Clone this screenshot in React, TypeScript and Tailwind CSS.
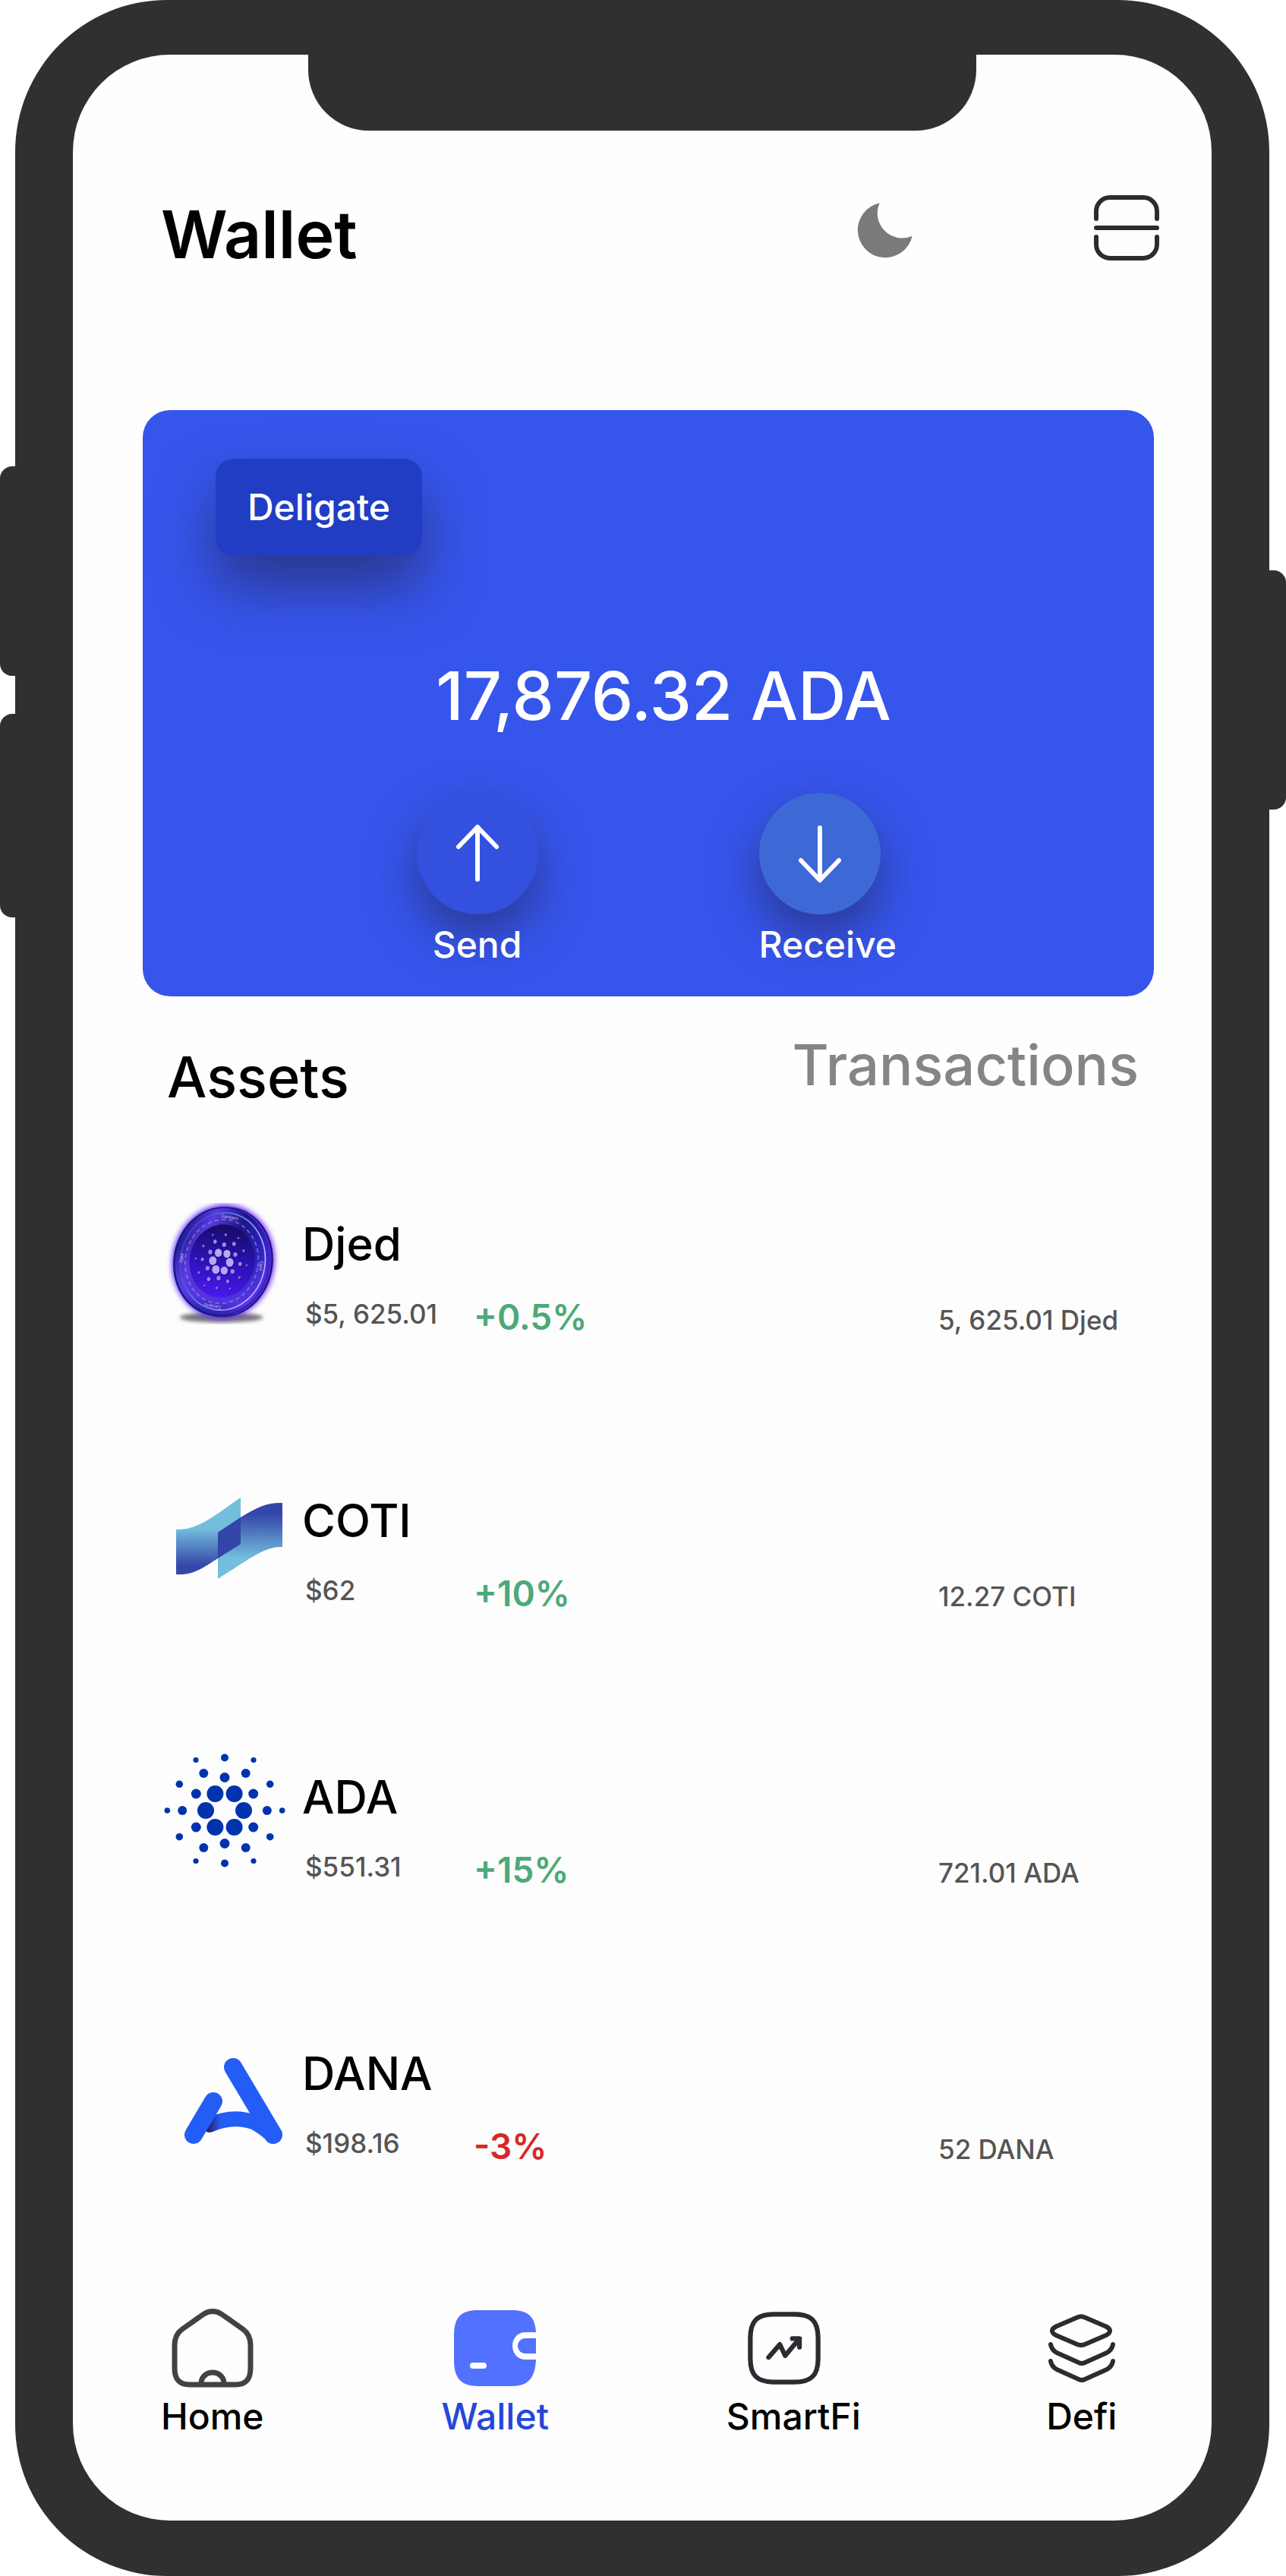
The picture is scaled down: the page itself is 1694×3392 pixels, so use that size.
import type { ReactNode } from "react";

const COIN_DOTS: [number, number, number][] = [
  [233, 239, 14], [267, 243, 14], [211, 270, 15], [278, 277, 15], [223, 305, 15], [256, 309, 14],
  [220, 195, 7], [256, 207, 8], [201, 236, 8], [295, 204, 7], [300, 246, 8], [170, 265, 6],
  [190, 300, 8], [319, 283, 7], [289, 313, 8], [234, 339, 8], [270, 352, 6], [195, 343, 7],
  [333, 231, 5], [316, 337, 5], [174, 212, 5], [262, 168, 5], [211, 168, 4], [312, 181, 4],
  [144, 262, 4], [156, 317, 5], [345, 288, 4], [227, 378, 5], [178, 368, 4], [279, 381, 4],
];

function DjedLogo() {
  return (
    <svg viewBox="18 42 480 480" className="size-40" aria-hidden="true">
      <defs>
        <linearGradient id="djed-face" x1="0" y1="0.3" x2="1" y2="0.6">
          <stop offset="0" stopColor="#1c1786" />
          <stop offset="0.25" stopColor="#5a3be0" />
          <stop offset="0.55" stopColor="#1d1585" />
          <stop offset="0.8" stopColor="#2a22b8" />
          <stop offset="1" stopColor="#4a30d8" />
        </linearGradient>
        <linearGradient id="djed-lower" x1="0" y1="0" x2="0" y2="1">
          <stop offset="0.45" stopColor="#5a38e6" stopOpacity="0" />
          <stop offset="0.85" stopColor="#5a38e6" stopOpacity="0.9" />
          <stop offset="1" stopColor="#2a1fae" />
        </linearGradient>
        <linearGradient id="djed-core" x1="0" y1="0" x2="0" y2="1">
          <stop offset="0" stopColor="#150c66" />
          <stop offset="0.5" stopColor="#2c12b4" />
          <stop offset="1" stopColor="#4a18ee" />
        </linearGradient>
        <linearGradient id="djed-ring" x1="0" y1="0" x2="1" y2="0.3">
          <stop offset="0" stopColor="#3b2ad0" />
          <stop offset="0.5" stopColor="#5d80e8" />
          <stop offset="1" stopColor="#c7a8ff" />
        </linearGradient>
        <filter id="djed-blur" x="-30%" y="-30%" width="160%" height="160%">
          <feGaussianBlur stdDeviation="11" />
        </filter>
        <filter id="djed-shadow" x="-20%" y="-150%" width="140%" height="400%">
          <feGaussianBlur stdDeviation="8" />
        </filter>
      </defs>
      <ellipse cx="245" cy="494" rx="164" ry="20" fill="#5f5c66" opacity="0.85" filter="url(#djed-shadow)" />
      <g transform="rotate(10 250 275)">
        <ellipse cx="252" cy="273" rx="202" ry="226" fill="#6a2cff" filter="url(#djed-blur)" />
        <ellipse cx="260" cy="274" rx="188" ry="218" fill="#21075e" />
        <ellipse cx="255" cy="274" rx="188" ry="217" fill="#4127d0" />
        <ellipse cx="243" cy="275" rx="188" ry="217" fill="#0f1c7c" />
        <ellipse cx="246" cy="274" rx="184" ry="212" fill="url(#djed-face)" />
        <ellipse cx="246" cy="274" rx="184" ry="212" fill="url(#djed-lower)" />
        <ellipse cx="250" cy="273" rx="167" ry="193" fill="none" stroke="url(#djed-ring)" strokeWidth="5" />
        <ellipse cx="246" cy="274" rx="144" ry="166" fill="none" stroke="#8f8cf0" strokeWidth="6" strokeDasharray="17 11" opacity="0.6" />
        <ellipse cx="247" cy="272" rx="129" ry="145" fill="url(#djed-core)" />
      </g>
      {COIN_DOTS.map(([x, y, r]) => (
        <g key={`${x}-${y}`}>
          <ellipse cx={x + 3} cy={y + 3} rx={r} ry={r * 1.15} fill="#12085a" opacity="0.7" />
          <ellipse cx={x} cy={y} rx={r} ry={r * 1.15} fill={r > 10 ? "#b9a5f5" : r > 5 ? "#9d86ee" : "#8a6ae0"} />
        </g>
      ))}
      <g fill="#c9c4f5" fontFamily="Inter, sans-serif" fontSize="17" textAnchor="middle">
        <text transform="translate(277 104) rotate(10)">Cardano</text>
        <text transform="translate(211 444) rotate(190)">Cardano</text>
        <text transform="translate(93 260) rotate(-84)">Djed</text>
        <text transform="translate(396 290) rotate(96)">Djed</text>
      </g>
    </svg>
  );
}

function CotiLogo() {
  return (
    <svg viewBox="0 0 160 160" className="size-40" aria-hidden="true">
      <defs>
        <linearGradient id="coti-left" gradientUnits="userSpaceOnUse" x1="0" y1="64" x2="0" y2="114">
          <stop offset="0" stopColor="#74bedd" />
          <stop offset="1" stopColor="#3446a9" />
        </linearGradient>
        <linearGradient id="coti-right" gradientUnits="userSpaceOnUse" x1="0" y1="46" x2="0" y2="104">
          <stop offset="0" stopColor="#3446a9" />
          <stop offset="1" stopColor="#74bedd" />
        </linearGradient>
      </defs>
      <path d="M16 66C46 67 68 46 101 24V85L71 104C52 116 38 127 16 125Z" fill="url(#coti-left)" />
      <path d="M71 70L101 50C122 37 136 30 156 31V89C134 88 118 101 71 131Z" fill="url(#coti-right)" />
      <path d="M71 70L101 50V85L71 104Z" fill="#3345a8" />
    </svg>
  );
}

const ADA_DOTS: [number, number, number][] = [
  [12.6, 22, 11], [25, 0, 11],
  [0, 43.5, 6.5], [37.7, 22, 6.5],
  [27.7, 49, 6], [55.8, 0, 6],
  [59.7, 34.7, 4.8], [0, 69.5, 5],
  [38, 66.5, 3.6], [75.7, 0, 3.8],
];

function AdaLogo() {
  return (
    <svg viewBox="0 0 160 160" className="size-40 overflow-visible" fill="#0033ad" aria-hidden="true">
      {ADA_DOTS.flatMap(([x, y, r]) =>
        [[1, 1], [-1, 1], [1, -1], [-1, -1]]
          .filter(([sx, sy]) => (x !== 0 || sx > 0) && (y !== 0 || sy > 0))
          .map(([sx, sy]) => <circle key={`${x * sx}:${y * sy}`} cx={80 + x * sx} cy={72 + y * sy} r={r} />),
      )}
    </svg>
  );
}

function DanaLogo() {
  return (
    <svg viewBox="0 0 160 160" className="size-40" fill="none" strokeLinecap="round" aria-hidden="true">
      <defs>
        <linearGradient id="dana-bar" gradientUnits="userSpaceOnUse" x1="54" y1="0" x2="74" y2="0">
          <stop offset="0.2" stopColor="#2b1a6e" />
          <stop offset="1" stopColor="#245df5" />
        </linearGradient>
      </defs>
      <path d="M60 122Q91 108 120 119Q134 127 144 137" stroke="url(#dana-bar)" strokeWidth="20" />
      <path d="M91 46L144 135" stroke="#245df5" strokeWidth="24" />
      <path d="M65 91L39 135" stroke="#245df5" strokeWidth="24" />
    </svg>
  );
}

function MoonIcon() {
  return (
    <svg viewBox="88 111 219 219" className="size-[73px]" aria-hidden="true">
      <path d="M177 112A109 109 0 1 0 306 242A98 98 0 0 1 177 112Z" fill="#7a7a7a" />
    </svg>
  );
}

function ScanIcon() {
  return (
    <svg viewBox="0 0 258 258" className="size-[86px]" fill="none" stroke="#292d32" strokeWidth="18" strokeLinecap="round" aria-hidden="true">
      <path d="M9 93V63A54 54 0 0 1 63 9H195A54 54 0 0 1 249 63V93M9 129H249M9 165V195A54 54 0 0 0 63 249H195A54 54 0 0 0 249 195V165" />
    </svg>
  );
}

function ArrowIcon({ down = false }: { down?: boolean }) {
  return (
    <svg viewBox="0 0 60 80" className="h-20 w-[60px]" fill="none" stroke="#fff" strokeWidth="6" strokeLinecap="round" strokeLinejoin="round" aria-hidden="true">
      <path d={down ? "M30 6V75M5 49L30 75L55 49" : "M30 74V5M5 31L30 5L55 31"} />
    </svg>
  );
}

function HomeIcon() {
  return (
    <svg viewBox="0 0 108 104" className="h-[104px] w-[108px]" fill="none" stroke="#434240" strokeWidth="7" aria-hidden="true">
      <path d="M54 3.5C49 3.5 45 5 41 8L14 27C7 32 4 38 4 48V78C4 93 10 100 24 100H84C98 100 104 93 104 78V48C104 38 101 32 94 27L67 8C63 5 59 3.5 54 3.5Z" />
      <path d="M39 98A15 14 0 0 1 69 98" />
    </svg>
  );
}

function WalletIcon() {
  return (
    <svg viewBox="0 0 108 100" className="h-[100px] w-[108px]" aria-hidden="true">
      <path d="M32 0H76C98 0 107 9 108 29H94C84 29 77 37 77 47S84 65 94 65H108C107 89 98 100 76 100H32C9 100 0 89 0 66V34C0 9 9 0 32 0Z" fill="#5271ff" />
      <path d="M108 37H94C88 37 84 42 84 47S88 57 94 57H108Z" fill="#5271ff" />
      <rect x="21" y="69" width="22" height="8" rx="4" fill="#fff" />
    </svg>
  );
}

function SmartFiIcon() {
  return (
    <svg viewBox="1.25 1.25 21.5 21.5" className="size-24" fill="none" stroke="#292d32" strokeWidth="1.4" strokeLinecap="round" strokeLinejoin="round" aria-hidden="true">
      <path d="M9 22h6c5 0 7-2 7-7V9c0-5-2-7-7-7H9C4 2 2 4 2 9v6c0 5 2 7 7 7Z" />
      <path d="M7.4 14.7L10.7 10.9L12.3 14.2L16.5 9.2M14.4 9.2H16.5V11.7" />
    </svg>
  );
}

function DefiIcon() {
  return (
    <svg viewBox="0 0 88 90" className="h-[90px] w-[88px]" fill="none" stroke="#292d32" strokeWidth="6" strokeLinecap="round" strokeLinejoin="round" aria-hidden="true">
      <path d="M38 4.5Q43 2 48 4.5L76 16.500Q86 22 76 28L48 40Q43 42 38 40L10 28Q0 22 10 16.500Z" />
      <path d="M3 40Q4 47 11 51L40 64Q44 66 48 64L77 51Q84 47 85 40" />
      <path d="M3 62Q4 69 11 73L40 86Q44 88 48 86L77 73Q84 69 85 62" />
    </svg>
  );
}

interface Asset {
  name: string;
  price: string;
  change: string;
  amount: string;
  logo: ReactNode;
}

const ASSETS: Asset[] = [
  { name: "Djed", price: "$5, 625.01", change: "+0.5%", amount: "5, 625.01 Djed", logo: <DjedLogo /> },
  { name: "COTI", price: "$62", change: "+10%", amount: "12.27 COTI", logo: <CotiLogo /> },
  { name: "ADA", price: "$551.31", change: "+15%", amount: "721.01 ADA", logo: <AdaLogo /> },
  { name: "DANA", price: "$198.16", change: "-3%", amount: "52 DANA", logo: <DanaLogo /> },
];

const NAV = [
  { label: "Home", icon: <HomeIcon />, active: false, iconClass: "" },
  { label: "Wallet", icon: <WalletIcon />, active: true, iconClass: "" },
  { label: "SmartFi", icon: <SmartFiIcon />, active: false, iconClass: "pr-6" },
  { label: "Defi", icon: <DefiIcon />, active: false, iconClass: "" },
];

function AssetRow({ asset }: { asset: Asset }) {
  return (
    <li className="flex h-[296px] rounded-[36px] bg-[#fdfdfd] pl-11">
      <div className="w-[182px] shrink-0 pt-[60px]">{asset.logo}</div>
      <div className="w-[226px] shrink-0 pt-20">
        <h2 className="text-[60px] leading-[68px] font-medium text-black">{asset.name}</h2>
        <p className="mt-[38px] pl-1 text-[35px] leading-[40px] font-medium whitespace-nowrap text-[#555]">{asset.price}</p>
      </div>
      <div className="flex flex-1 items-baseline justify-between pt-[182px]">
        <p className={`text-[46px] leading-[56px] font-semibold ${asset.change.startsWith("-") ? "text-[#d92626]" : "text-[#4caa77]"}`}>
          {asset.change}
        </p>
        <p className="w-[300px] text-[35px] leading-[56px] font-medium whitespace-nowrap text-[#555]">{asset.amount}</p>
      </div>
    </li>
  );
}

export default function App() {
  return (
    <div className="relative bg-white pr-[22px] pl-5 font-['Inter',sans-serif]">
      <span className="absolute top-[614px] left-0 h-[276px] w-10 rounded-l-2xl bg-[#303030]" />
      <span className="absolute top-[940px] left-0 h-[268px] w-10 rounded-l-2xl bg-[#303030]" />
      <span className="absolute top-[751px] right-0 h-[315px] w-10 rounded-r-2xl bg-[#303030]" />

      <div className="relative rounded-[200px] bg-[#303030] px-[76px] pt-[72px] pb-[73px]">
        <div className="relative rounded-[128px] bg-[#fefefe]">
          <div className="absolute top-0 left-1/2 h-[100px] w-[880px] -translate-x-1/2 rounded-b-[80px] bg-[#303030]" />

          <header className="flex items-start pt-[185px] pr-[69px] pl-[116px]">
            <h1 className="text-[86px] leading-[104px] font-semibold text-black">Wallet</h1>
            <button type="button" aria-label="Dark mode" className="mt-2.5 ml-auto">
              <MoonIcon />
            </button>
            <button type="button" aria-label="Scan" className="ml-[239px]">
              <ScanIcon />
            </button>
          </header>

          <main>
            <section className="mt-[179px] mr-[76px] ml-[92px] rounded-[36px] bg-[#3655eb] pt-16 pb-10 text-white">
              <button type="button" className="ml-24 block h-32 w-[272px] rounded-3xl bg-[#213dc4] text-[48px] font-medium shadow-[0_40px_72px_rgba(33,37,80,0.6)]">
                Deligate
              </button>
              <p className="mt-[136px] pl-10 text-center text-[88px] leading-[96px] font-medium">17,876.32 ADA</p>
              <div className="mt-20 flex justify-center gap-[291px]">
                <button type="button" className="flex w-40 flex-col items-center">
                  <span className="flex size-40 items-center justify-center rounded-full bg-[#3350de] shadow-[0_28px_60px_rgba(33,37,80,0.55)]">
                    <ArrowIcon />
                  </span>
                  <span className="relative mt-3 text-[48px] leading-[56px] font-medium">Send</span>
                </button>
                <button type="button" className="flex w-40 flex-col items-start">
                  <span className="flex size-40 items-center justify-center rounded-full bg-[#3d69d6] shadow-[0_28px_60px_rgba(33,37,80,0.55)]">
                    <ArrowIcon down />
                  </span>
                  <span className="relative mt-3 text-[48px] leading-[56px] font-medium">Receive</span>
                </button>
              </div>
            </section>

            <div role="tablist" className="mt-[46px] flex items-start justify-between pr-24 pl-[124px] text-[74px] leading-[88px] font-medium">
              <button type="button" role="tab" aria-selected="true" className="pt-4 text-black">Assets</button>
              <button type="button" role="tab" aria-selected="false" className="text-[#858585]">Transactions</button>
            </div>

            <ul className="mt-[62px] mr-[60px] ml-[76px] flex flex-col gap-[68px]">
              {ASSETS.map((asset) => (
                <AssetRow key={asset.name} asset={asset} />
              ))}
            </ul>
          </main>

          <nav className="mt-32 grid grid-cols-[370fr_376fr_422fr_96fr] pr-[122px] pb-[109px] pl-[116px]">
            {NAV.map(({ label, icon, active, iconClass }) => (
              <a key={label} href="#" aria-current={active ? "page" : undefined} className="flex w-fit flex-col items-center">
                <span className={`flex h-[104px] items-center ${iconClass}`}>{icon}</span>
                <span className={`mt-[10px] text-[48px] leading-[56px] font-medium ${active ? "text-[#2547d9]" : "text-black"}`}>{label}</span>
              </a>
            ))}
          </nav>
        </div>
      </div>
    </div>
  );
}
